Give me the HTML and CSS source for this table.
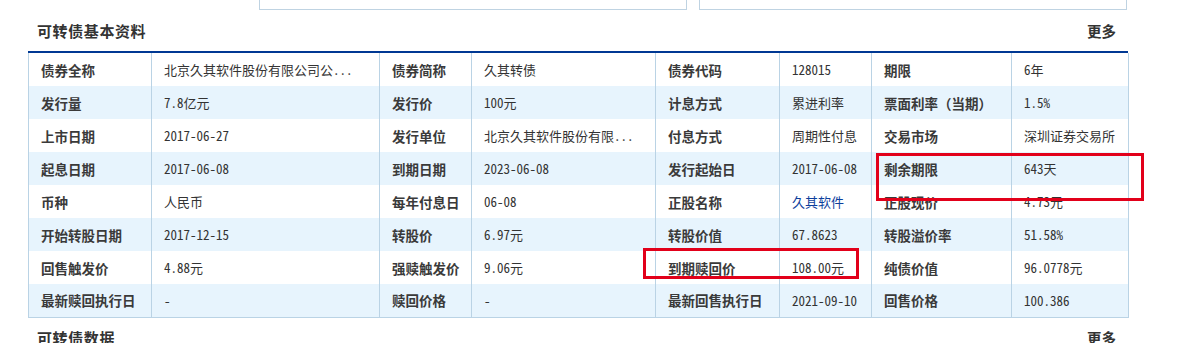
FILE: index.html
```html
<!DOCTYPE html>
<html lang="zh-CN">
<head>
<meta charset="utf-8">
<title>可转债基本资料</title>
<link rel="stylesheet" href="styles.css">
</head>
<body>
<div class="top-boxes">
  <div class="top-box"></div>
  <div class="top-box"></div>
</div>
<div class="section">
  <div class="sec-head">
    <span class="sec-title">可转债基本资料</span>
    <a class="more">更多</a>
  </div>
  <table class="info">
    <colgroup>
      <col class="c1"><col class="c2"><col class="c3"><col class="c4"><col class="c5"><col class="c6"><col class="c7"><col class="c8">
    </colgroup>
    <tr>
      <th>债券全称</th><td>北京久其软件股份有限公司公...</td>
      <th>债券简称</th><td>久其转债</td>
      <th>债券代码</th><td>128015</td>
      <th>期限</th><td>6年</td>
    </tr>
    <tr>
      <th>发行量</th><td>7.8亿元</td>
      <th>发行价</th><td>100元</td>
      <th>计息方式</th><td>累进利率</td>
      <th>票面利率（当期）</th><td>1.5%</td>
    </tr>
    <tr>
      <th>上市日期</th><td>2017-06-27</td>
      <th>发行单位</th><td>北京久其软件股份有限...</td>
      <th>付息方式</th><td>周期性付息</td>
      <th>交易市场</th><td>深圳证券交易所</td>
    </tr>
    <tr>
      <th>起息日期</th><td>2017-06-08</td>
      <th>到期日期</th><td>2023-06-08</td>
      <th>发行起始日</th><td>2017-06-08</td>
      <th>剩余期限</th><td>643天</td>
    </tr>
    <tr>
      <th>币种</th><td>人民币</td>
      <th>每年付息日</th><td>06-08</td>
      <th>正股名称</th><td><a class="link">久其软件</a></td>
      <th>正股现价</th><td>4.73元</td>
    </tr>
    <tr>
      <th>开始转股日期</th><td>2017-12-15</td>
      <th>转股价</th><td>6.97元</td>
      <th>转股价值</th><td>67.8623</td>
      <th>转股溢价率</th><td>51.58%</td>
    </tr>
    <tr>
      <th>回售触发价</th><td>4.88元</td>
      <th>强赎触发价</th><td>9.06元</td>
      <th>到期赎回价</th><td>108.00元</td>
      <th>纯债价值</th><td>96.0778元</td>
    </tr>
    <tr>
      <th>最新赎回执行日</th><td>-</td>
      <th>赎回价格</th><td>-</td>
      <th>最新回售执行日</th><td>2021-09-10</td>
      <th>回售价格</th><td>100.386</td>
    </tr>
  </table>
  <div class="sec-head sec-head-next">
    <span class="sec-title">可转债数据</span>
    <a class="more">更多</a>
  </div>
</div>
<div class="mark mark-remain"></div>
<div class="mark mark-redeem"></div>
</body>
</html>
```
FILE: styles.css
```css
html, body {
  margin: 0;
  padding: 0;
  background: #fff;
  font-family: "Noto Sans CJK SC", "Noto Sans", sans-serif;
  color: #333;
}

.top-boxes {
  display: flex;
  gap: 12px;
  padding-left: 259px;
  height: 10px;
}

.top-box {
  width: 426px;
  height: 9px;
  border: 1px solid #bfd3e2;
  border-top: none;
}

.section {
  width: 1100px;
  margin-left: 28px;
}

.sec-head {
  display: flex;
  align-items: center;
  justify-content: space-between;
  padding: 0 12px 0 9px;
  border-bottom: 2px solid #003893;
  box-sizing: border-box;
  height: 43px;
}

.sec-head-next {
  border-bottom: none;
  height: 40px;
}

.sec-title {
  font-size: 15px;
  font-weight: bold;
  letter-spacing: 0.6px;
  color: #333;
}

.more {
  font-size: 14.5px;
  font-weight: bold;
  color: #333;
  cursor: pointer;
}

.info {
  width: 1100px;
  border-collapse: collapse;
  table-layout: fixed;
  border: 1px solid #bad3e5;
  border-top: none;
}

.c1 { width: 123px; }
.c2 { width: 228px; }
.c3 { width: 92px; }
.c4 { width: 184px; }
.c5 { width: 124px; }
.c6 { width: 92px; }
.c7 { width: 140px; }
.c8 { width: 117px; }

.info tr {
  height: 33px;
}

.info tr:nth-child(even) {
  background: #e7f4fd;
}

.info th,
.info td {
  padding: 0 0 0 12px;
  border-left: 1px solid #bad3e5;
  border-right: 1px solid #bad3e5;
  text-align: left;
  white-space: nowrap;
  overflow: hidden;
  height: 33px;
  box-sizing: border-box;
}

.info th {
  font-size: 13.5px;
  font-weight: bold;
  color: #3a3a3a;
}

.info td {
  font-family: "Noto Sans Mono CJK SC", "Noto Sans CJK SC", monospace;
  font-size: 13px;
  font-weight: normal;
  color: #333;
}

.link {
  color: #0b3e9c;
  cursor: pointer;
}

.mark {
  position: absolute;
  border: 3px solid #e2001a;
  box-sizing: border-box;
}

.mark-remain {
  left: 876px;
  top: 153px;
  width: 268px;
  height: 48px;
}

.mark-redeem {
  left: 643px;
  top: 248px;
  width: 216px;
  height: 31px;
}
```
